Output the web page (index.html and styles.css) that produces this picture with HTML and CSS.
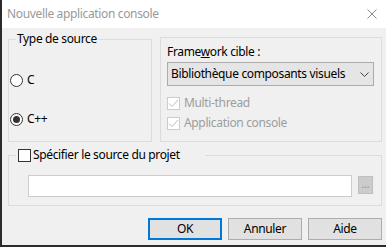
FILE: index.html
```html
<!DOCTYPE html>
<html lang="fr">
<head>
    <meta charset="UTF-8">
    <title>Nouvelle application console</title>
    <link rel="stylesheet" href="styles.css">
</head>
<body>
    <div class="dialog">
        <div class="titlebar">
            <span class="title">Nouvelle application console</span>
            <svg class="close" width="10" height="10" viewBox="0 0 10 10">
                <path d="M0.5 0.5 L9.5 9.5 M9.5 0.5 L0.5 9.5" stroke="#8c8c8c" stroke-width="1" fill="none"/>
            </svg>
        </div>

        <div class="content">
            <div class="top-row">
                <fieldset class="group source-group">
                    <legend>Type de source</legend>
                    <div class="radio-list">
                        <div class="radio-row">
                            <span class="radio"></span>
                            <span>C</span>
                        </div>
                        <div class="radio-row">
                            <span class="radio checked"></span>
                            <span>C++</span>
                        </div>
                    </div>
                </fieldset>

                <fieldset class="group framework-group">
                    <div class="label">Frame<u>w</u>ork cible :</div>
                    <div class="select">
                        <span>Bibliothèque composants visuels</span>
                        <svg width="9" height="5" viewBox="0 0 9 5">
                            <path d="M0.5 0.5 L4.5 4.5 L8.5 0.5" stroke="#444" stroke-width="1" fill="none"/>
                        </svg>
                    </div>
                    <div class="check-row disabled">
                        <span class="checkbox">
                            <svg width="11" height="11" viewBox="0 0 11 11"><path d="M1 5.5 L4 8.5 L10 2" stroke="#bdbdbd" stroke-width="1" fill="none"/></svg>
                        </span>
                        <span>Multi-thread</span>
                    </div>
                    <div class="check-row disabled">
                        <span class="checkbox">
                            <svg width="11" height="11" viewBox="0 0 11 11"><path d="M1 5.5 L4 8.5 L10 2" stroke="#bdbdbd" stroke-width="1" fill="none"/></svg>
                        </span>
                        <span>Application console</span>
                    </div>
                </fieldset>
            </div>

            <fieldset class="group project-group">
                <legend>
                    <span class="checkbox dark"></span>
                    <span>Spécifier le source du projet</span>
                </legend>
                <div class="path-row">
                    <div class="path-input"></div>
                    <div class="browse">...</div>
                </div>
            </fieldset>

            <div class="buttons">
                <div class="btn default">OK</div>
                <div class="btn">Annuler</div>
                <div class="btn">Aide</div>
            </div>
        </div>
    </div>
</body>
</html>
```

FILE: styles.css
```css
* {
    margin: 0;
    padding: 0;
    box-sizing: border-box;
}
body {
    font-family: "Noto Sans", "DejaVu Sans", sans-serif;
    font-size: 12px;
    line-height: 16px;
    letter-spacing: -0.35px;
    color: #000;
    background: #2b2b2b;
}
.dialog {
    width: 386px;
    height: 247px;
    border-left: 2px solid #2b2b2b;
    border-bottom: 2px solid #2b2b2b;
    background: #f0f0f0;
    display: flex;
    flex-direction: column;
}
.titlebar {
    height: 28px;
    background: #fff;
    display: flex;
    align-items: center;
    justify-content: space-between;
    padding: 0 9px 0 5px;
}
.title {
    color: #999;
}
.close {
    display: block;
}
.content {
    padding: 3px 4px 0 6px;
    display: flex;
    flex-direction: column;
}
.top-row {
    display: flex;
    gap: 8px;
}
.group {
    border: 1px solid #dcdcdc;
    min-width: 0;
}
.group legend {
    padding: 0 1px;
    margin-left: 7px;
    line-height: 16px;
}
.source-group {
    width: 144px;
    height: 111px;
}
.radio-list {
    display: flex;
    flex-direction: column;
    gap: 23px;
    padding: 25px 0 0 1px;
}
.radio-row {
    display: flex;
    align-items: center;
    gap: 4px;
    height: 16px;
}
.radio {
    width: 13px;
    height: 13px;
    border: 1px solid #333;
    border-radius: 50%;
    background: #fff;
    display: flex;
    align-items: center;
    justify-content: center;
}
.radio.checked::after {
    content: "";
    width: 7px;
    height: 7px;
    border-radius: 50%;
    background: #333;
}
.framework-group {
    width: 222px;
    margin-top: 6px;
    padding: 6px 6px 0 6px;
}
.label {
    height: 16px;
}
.select {
    margin-top: 2px;
    width: 207px;
    height: 24px;
    background: #e5e5e5;
    border: 1px solid #acacac;
    display: flex;
    align-items: center;
    justify-content: space-between;
    padding: 0 4px 0 3px;
}
.select svg {
    display: block;
}
.check-row {
    display: flex;
    align-items: center;
    gap: 4px;
    height: 20px;
}
.select + .check-row {
    margin-top: 7px;
}
.check-row.disabled {
    color: #9d9d9d;
}
.checkbox {
    width: 13px;
    height: 13px;
    border: 1px solid #cccccc;
    background: #fff;
    display: flex;
    align-items: center;
    justify-content: center;
}
.checkbox svg {
    display: block;
}
.checkbox.dark {
    border-color: #333;
}
.project-group {
    margin-top: 5px;
    width: 374px;
    padding: 12px 0 8px 0;
}
.project-group legend {
    display: flex;
    align-items: center;
    gap: 2px;
    width: 189px;
    margin-left: 7px;
    padding: 0 0 0 2px;
}
.path-row {
    display: flex;
    align-items: center;
    gap: 6px;
    margin-left: 19px;
}
.path-input {
    width: 324px;
    height: 22px;
    background: #fff;
    border: 1px solid #cccccc;
}
.browse {
    width: 15px;
    height: 18px;
    margin-top: -2px;
    background: #cccccc;
    border: 1px solid #bfbfbf;
    color: #8d8d8d;
    font-size: 10px;
    line-height: 14px;
    letter-spacing: 0;
    text-align: center;
    overflow: hidden;
}
.buttons {
    display: flex;
    justify-content: flex-end;
    gap: 6px;
    margin-top: 12px;
}
.btn {
    width: 74px;
    height: 22px;
    background: #e1e1e1;
    border: 1px solid #adadad;
    display: flex;
    align-items: center;
    justify-content: center;
}
.btn.default {
    border: 2px solid #0078d7;
}
```
